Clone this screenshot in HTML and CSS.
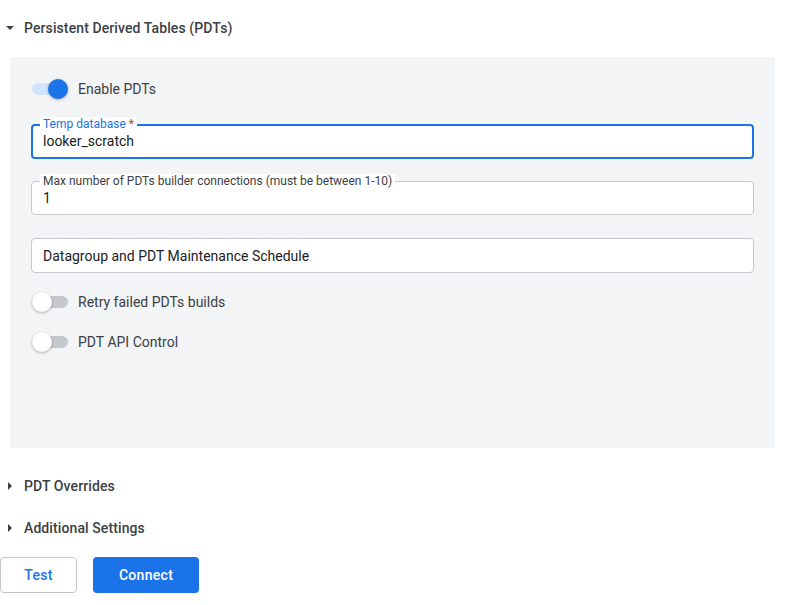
FILE: index.html
```html
<!DOCTYPE html>
<html>
<head>
<meta charset="utf-8">
<link rel="stylesheet" href="styles.css">
</head>
<body>
<div class="page">
  <div class="section-head expanded">
    <span class="caret"><svg width="10" height="6" viewBox="0 0 10 6"><path d="M1 1h8L5 5z" fill="#3c4043"/></svg></span>
    <span class="section-title">Persistent Derived Tables (PDTs)</span>
  </div>
  <div class="panel">
    <div class="toggle-row first">
      <span class="toggle on"><span class="track"></span><span class="thumb"></span></span>
      <span class="toggle-label">Enable PDTs</span>
    </div>
    <div class="field focused">
      <span class="field-label">Temp database <span class="req">*</span></span>
      <span class="field-value">looker_scratch</span>
    </div>
    <div class="field tight">
      <span class="field-label">Max number of PDTs builder connections (must be between 1-10)</span>
      <span class="field-value">1</span>
    </div>
    <div class="field">
      <span class="field-value">Datagroup and PDT Maintenance Schedule</span>
    </div>
    <div class="toggle-row after-field">
      <span class="toggle"><span class="track"></span><span class="thumb"></span></span>
      <span class="toggle-label">Retry failed PDTs builds</span>
    </div>
    <div class="toggle-row">
      <span class="toggle"><span class="track"></span><span class="thumb"></span></span>
      <span class="toggle-label">PDT API Control</span>
    </div>
  </div>
  <div class="section-head collapsed">
    <span class="caret"><svg width="6" height="10" viewBox="0 0 6 10"><path d="M1 1v8l4-4z" fill="#3c4043"/></svg></span>
    <span class="section-title">PDT Overrides</span>
  </div>
  <div class="section-head collapsed">
    <span class="caret"><svg width="6" height="10" viewBox="0 0 6 10"><path d="M1 1v8l4-4z" fill="#3c4043"/></svg></span>
    <span class="section-title">Additional Settings</span>
  </div>
  <div class="actions">
    <button class="btn btn-outline">Test</button>
    <button class="btn btn-primary">Connect</button>
  </div>
</div>
</body>
</html>
```

FILE: styles.css
```css
* { box-sizing: border-box; }
html, body { margin: 0; padding: 0; background: #fff; }
body {
  font-family: Roboto, "Liberation Sans", Arial, sans-serif;
  color: #3c4043;
  font-size: 14px;
}
.page { width: 788px; }

.section-head {
  display: flex;
  align-items: center;
}
.section-head.expanded { height: 56px; }
.section-head.collapsed { height: 42px; }
.caret {
  width: 20px;
  display: flex;
  justify-content: center;
  align-items: center;
  margin-right: 4px;
}
.section-title {
  font-size: 14px;
  font-weight: 500;
  color: #3c4043;
  letter-spacing: 0.1px;
}

.panel {
  margin: 1px 13px 17px 10px;
  background: #f3f4f6;
  padding: 20px 21px 94px 21px;
  height: 391px;
  display: flex;
  flex-direction: column;
}

.toggle-row {
  display: flex;
  align-items: center;
  height: 24px;
  padding-left: 1px;
  margin-top: 16px;
}
.toggle-row.first { margin-top: 0; }
.toggle-row.after-field { margin-top: 17px; }
.toggle {
  position: relative;
  width: 36px;
  height: 20px;
  margin-right: 10px;
  flex: none;
}
.toggle .track {
  position: absolute;
  left: 0;
  top: 4px;
  width: 36px;
  height: 12px;
  border-radius: 6px;
  background: #c5c8cd;
}
.toggle .thumb {
  position: absolute;
  top: 0;
  left: 0;
  width: 20px;
  height: 20px;
  border-radius: 50%;
  background: #fff;
  box-shadow: 0 1px 3px rgba(0,0,0,0.3);
}
.toggle.on .track { background: #d2e3fc; }
.toggle.on .thumb { left: 16px; background: #1a73e8; }
.toggle-label { font-size: 14px; color: #3c4043; }

.field {
  position: relative;
  height: 35px;
  margin-top: 23px;
  background: #fff;
  border: 1px solid #c6c9ce;
  border-radius: 4px;
  padding: 0 11px;
  display: flex;
  align-items: center;
}
.field.tight { margin-top: 22px; }
.field.focused {
  margin-top: 23px;
  border: 2px solid #1a73e8;
  padding: 0 10px;
}
.field-value {
  font-size: 14px;
  color: #202124;
}
.field-label {
  position: absolute;
  left: 8px;
  top: -8px;
  padding: 0 3px;
  background: #fff;
  font-size: 12px;
  line-height: 14px;
  color: #3c4043;
}
.field.focused .field-label {
  left: 7px;
  top: -9px;
  color: #1a73e8;
}
.req { color: #d93025; }

.actions {
  display: flex;
  gap: 16px;
  margin-top: 8px;
}
.btn {
  height: 36px;
  border-radius: 4px;
  font-family: Roboto, "Liberation Sans", Arial, sans-serif;
  font-size: 14px;
  font-weight: 500;
  letter-spacing: 0.3px;
  cursor: pointer;
}
.btn-outline {
  width: 77px;
  background: #fff;
  border: 1px solid #c4c7cc;
  color: #1a73e8;
}
.btn-primary {
  width: 106px;
  background: #1a73e8;
  border: none;
  color: #fff;
}
```
